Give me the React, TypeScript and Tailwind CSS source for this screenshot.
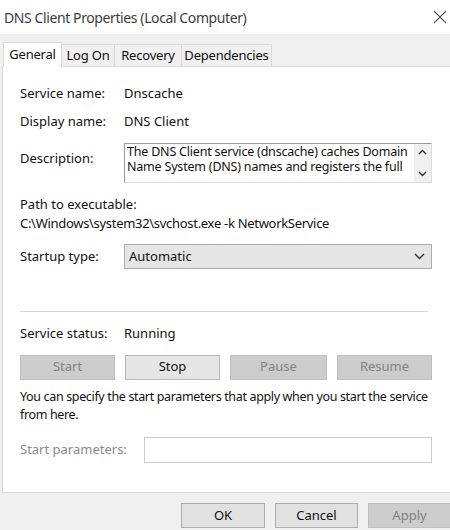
import React from "react";

const font = { fontFamily: '"Noto Sans", "Segoe UI", sans-serif' };

function Btn({ label, disabled, className = "" }: { label: string; disabled?: boolean; className?: string }) {
  return (
    <div
      className={
        "flex h-[25px] items-center justify-center border text-[13px] " +
        (disabled
          ? "border-[#bfbfbf] bg-[#cccccc] text-[#838383] "
          : "border-[#adadad] bg-[#e1e1e1] text-[#111] ") +
        className
      }
    >
      {label}
    </div>
  );
}

function Tab({ label, selected, w }: { label: string; selected?: boolean; w: string }) {
  return (
    <div
      className={
        "flex items-center justify-center border border-b-0 border-[#d9d9d9] text-[13px] tracking-[-0.2px] text-[#111] " +
        w +
        (selected ? " h-[25px] bg-white -mb-px z-10 relative" : " h-[22px] bg-[#f0f0f0] border-l-0")
      }
    >
      {label}
    </div>
  );
}

export default function App() {
  return (
    <div className="w-[450px] h-[530px] overflow-hidden bg-[#f0f0f0] text-[#111]" style={font}>
      {/* title bar */}
      <div className="flex h-[34px] items-center justify-between bg-white pl-[4px] pr-[2px]">
        <span className="text-[14px] tracking-[-0.4px] text-[#3c3c3c]">DNS Client Properties (Local Computer)</span>
        <svg width="14" height="14" viewBox="0 0 14 14" className="mr-[1px]">
          <path d="M1 1 L13 13 M13 1 L1 13" stroke="#555" strokeWidth="1.1" fill="none" />
        </svg>
      </div>
      {/* tabs */}
      <div className="flex h-[32px] items-end pl-[3px]">
        <Tab label="General" selected w="w-[59px]" />
        <Tab label="Log On" w="w-[53px]" />
        <Tab label="Recovery" w="w-[67px]" />
        <Tab label="Dependencies" w="w-[90px]" />
      </div>
      {/* panel */}
      <div className="ml-[2px] mr-[-2px] h-[427px] border border-[#d9d9d9] bg-white pl-[17px] pr-[19px] text-[13px]">
        <div className="flex h-[36px] items-end">
          <span className="w-[104px]">Service name:</span>
          <span>Dnscache</span>
        </div>
        <div className="flex h-[28px] items-end">
          <span className="w-[104px]">Display name:</span>
          <span>DNS Client</span>
        </div>
        <div className="mt-[12px] flex">
          <span className="w-[104px] pt-[6px]">Description:</span>
          <div className="flex h-[40px] flex-1 border border-[#9a9a9a] border-r-[#dcdcdc] border-b-[#dcdcdc]">
            <div className="flex-1 pl-[2px] text-[12.5px] leading-[15px] tracking-[-0.2px]">
              The DNS Client service (dnscache) caches Domain Name System (DNS) names and registers the full
            </div>
            <div className="flex w-[17px] flex-col items-center justify-between bg-[#f0f0f0] py-[5px]">
              <svg width="9" height="6" viewBox="0 0 9 6">
                <path d="M1 5 L4.5 1.5 L8 5" stroke="#333" strokeWidth="1.4" fill="none" />
              </svg>
              <svg width="9" height="6" viewBox="0 0 9 6">
                <path d="M1 1 L4.5 4.5 L8 1" stroke="#333" strokeWidth="1.4" fill="none" />
              </svg>
            </div>
          </div>
        </div>
        <div className="mt-[12px] leading-[19px]">
          <div>Path to executable:</div>
          <div className="tracking-[-0.3px]">C:\Windows\system32\svchost.exe -k NetworkService</div>
        </div>
        <div className="mt-[11px] flex items-center">
          <span className="w-[104px]">Startup type:</span>
          <div className="flex h-[25px] flex-1 items-center justify-between border border-[#acacac] bg-[#e5e5e5] pl-[4px] pr-[6px]">
            <span>Automatic</span>
            <svg width="11" height="7" viewBox="0 0 11 7">
              <path d="M1 1 L5.5 5.5 L10 1" stroke="#333" strokeWidth="1.4" fill="none" />
            </svg>
          </div>
        </div>
        <div className="mt-[42px] mr-[4px] h-px bg-[#d4d4d4]" />
        <div className="mt-[12px] flex">
          <span className="w-[104px]">Service status:</span>
          <span>Running</span>
        </div>
        <div className="mt-[11px] flex gap-[10px]">
          <Btn label="Start" disabled className="w-[95px]" />
          <Btn label="Stop" className="w-[95px] border-[#b9b9b9] bg-[#e6e6e6]" />
          <Btn label="Pause" disabled className="w-[97px]" />
          <Btn label="Resume" disabled className="w-[95px]" />
        </div>
        <div className="mt-[8px] text-[12.5px] leading-[18px] tracking-[-0.35px]">
          You can specify the start parameters that apply when you start the service from here.
        </div>
        <div className="mt-[13px] flex items-center">
          <span className="w-[124px] text-[#8a8a8a]">Start parameters:</span>
          <div className="h-[26px] flex-1 border border-[#cccccc] bg-white" />
        </div>
      </div>
      {/* footer */}
      <div className="flex justify-end gap-[10px] pt-[10px] mr-[-1px]">
        <Btn label="OK" className="w-[84px]" />
        <Btn label="Cancel" className="w-[83px]" />
        <Btn label="Apply" disabled className="w-[83px]" />
      </div>
    </div>
  );
}
